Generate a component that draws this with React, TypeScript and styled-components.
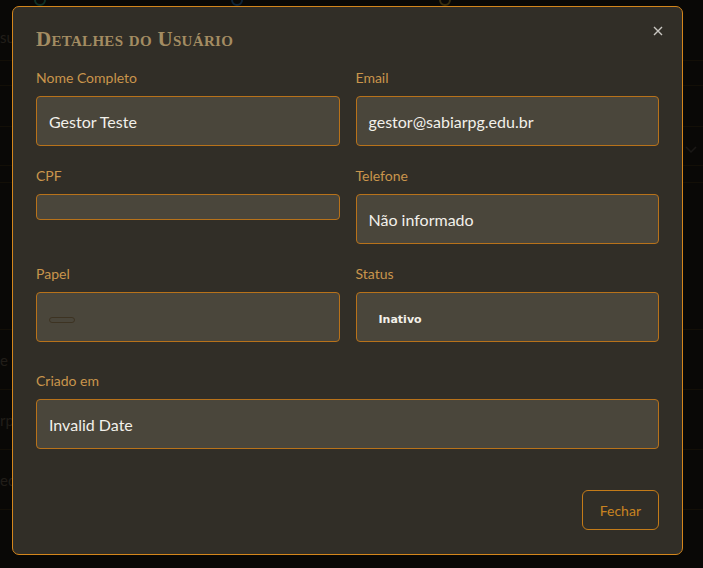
import React from "react";
import styled, { createGlobalStyle } from "styled-components";

const GlobalStyle = createGlobalStyle`
  html, body { margin: 0; padding: 0; background: #0f0e0c; }
  body { font-family: Lato, "Noto Sans", sans-serif; }
  * { box-sizing: border-box; }
`;

const Page = styled.div`
  position: relative;
  width: 703px;
  height: 568px;
  overflow: hidden;
  background: #14120f;
`;

const BgTable = styled.div`
  display: flex;
  flex-direction: column;
`;

const BgRow = styled.div<{ $h: number }>`
  height: ${(p) => p.$h}px;
  border-bottom: 1px solid #2c2210;
  display: flex;
  align-items: center;
  color: #4a4236;
  font-size: 15px;
  font-family: Lato, sans-serif;
`;

const BgIcons = styled.div`
  display: flex;
  height: 14px;
`;

const BgIcon = styled.div<{ $c: string; $x: number }>`
  width: 12px;
  height: 12px;
  margin-left: ${(p) => p.$x}px;
  margin-top: -6px;
  border: 2px solid ${(p) => p.$c};
  border-radius: 50%;
`;

const BgChevron = styled.div`
  position: absolute;
  right: 6px;
  top: 138px;
`;

const Overlay = styled.div`
  position: absolute;
  inset: 0;
  background: rgba(0, 0, 0, 0.55);
  display: flex;
  align-items: flex-start;
  justify-content: flex-start;
  padding: 6px 0 0 12px;
`;

const Modal = styled.div`
  position: relative;
  width: 671px;
  background: #312e27;
  border: 1px solid #d4861c;
  border-radius: 7px;
  padding: 21px 23px 24px 23px;
  display: flex;
  flex-direction: column;
`;

const Title = styled.h2`
  margin: 0 0 18px 0;
  font-family: "Liberation Serif", "DejaVu Serif", serif;
  font-variant: small-caps;
  font-weight: 700;
  font-size: 21px;
  line-height: 22px;
  letter-spacing: 0.3px;
  color: #a38c62;
`;

const CloseButton = styled.button`
  position: absolute;
  top: 16px;
  right: 16px;
  width: 16px;
  height: 16px;
  padding: 0;
  border: none;
  background: transparent;
  display: flex;
  align-items: center;
  justify-content: center;
  cursor: pointer;
`;

const Grid = styled.div`
  display: grid;
  grid-template-columns: 1fr 1fr;
  column-gap: 16px;
  row-gap: 20px;
  align-items: start;
`;

const Field = styled.div<{ $full?: boolean }>`
  display: flex;
  flex-direction: column;
  grid-column: ${(p) => (p.$full ? "1 / -1" : "auto")};
  margin-top: ${(p) => (p.$full ? "9px" : "0")};
`;

const Label = styled.label`
  font-family: Lato, sans-serif;
  font-size: 14px;
  line-height: 20px;
  color: #c9954c;
  margin-bottom: 8px;
`;

const Box = styled.div<{ $empty?: boolean }>`
  min-height: ${(p) => (p.$empty ? "26px" : "50px")};
  background: #4a463b;
  border: 1px solid #b8721a;
  border-radius: 4px;
  padding: 0 12px;
  display: flex;
  align-items: center;
  font-family: Lato, sans-serif;
  font-size: 16px;
  color: #f2f0ea;
`;

const Badge = styled.span<{ $outlined?: boolean }>`
  display: inline-block;
  min-width: 22px;
  padding: ${(p) => (p.$outlined ? "2px 10px" : "3px 9px")};
  border: 1px solid ${(p) => (p.$outlined ? "#3d3322" : "transparent")};
  border-radius: 10px;
  font-family: "DejaVu Sans", Verdana, sans-serif;
  font-size: 11px;
  font-weight: 700;
  line-height: ${(p) => (p.$outlined ? "0" : "14px")};
  color: #f4f1ea;
  margin-top: 6px;
`;

const Footer = styled.div`
  display: flex;
  justify-content: flex-end;
  margin-top: 41px;
`;

const Button = styled.button`
  height: 40px;
  padding: 0 17px;
  background: transparent;
  border: 1px solid #c47b18;
  border-radius: 6px;
  font-family: Lato, sans-serif;
  font-size: 14px;
  color: #c98421;
  cursor: pointer;
`;

export default function App() {
  return (
    <>
      <GlobalStyle />
      <Page>
        <BgTable>
          <BgIcons>
            <BgIcon $c="#1f6b55" $x={34} />
            <BgIcon $c="#1f4f7a" $x={185} />
            <BgIcon $c="#7a6420" $x={196} />
          </BgIcons>
          <BgRow $h={47}>su</BgRow>
          <BgRow $h={25} />
          <BgRow $h={41} />
          <BgRow $h={39} />
          <BgRow $h={17} />
          <BgRow $h={147} />
          <BgRow $h={60}>e</BgRow>
          <BgRow $h={60}>rp</BgRow>
          <BgRow $h={60}>ed</BgRow>
        </BgTable>
        <BgChevron>
          <svg width="12" height="8" viewBox="0 0 12 8">
            <path d="M1 1l5 5 5-5" stroke="#3a3630" strokeWidth="1.5" fill="none" />
          </svg>
        </BgChevron>
        <Overlay>
          <Modal>
            <Title>Detalhes do Usuário</Title>
            <CloseButton aria-label="Fechar">
              <svg width="10" height="10" viewBox="0 0 10 10">
                <path d="M1 1l8 8M9 1l-8 8" stroke="#c9c7c2" strokeWidth="1.4" />
              </svg>
            </CloseButton>
            <Grid>
              <Field>
                <Label>Nome Completo</Label>
                <Box>Gestor Teste</Box>
              </Field>
              <Field>
                <Label>Email</Label>
                <Box>gestor@sabiarpg.edu.br</Box>
              </Field>
              <Field>
                <Label>CPF</Label>
                <Box $empty />
              </Field>
              <Field>
                <Label>Telefone</Label>
                <Box>Não informado</Box>
              </Field>
              <Field>
                <Label>Papel</Label>
                <Box>
                  <Badge $outlined>&nbsp;</Badge>
                </Box>
              </Field>
              <Field>
                <Label>Status</Label>
                <Box>
                  <Badge>Inativo</Badge>
                </Box>
              </Field>
              <Field $full>
                <Label>Criado em</Label>
                <Box>Invalid Date</Box>
              </Field>
            </Grid>
            <Footer>
              <Button>Fechar</Button>
            </Footer>
          </Modal>
        </Overlay>
      </Page>
    </>
  );
}
